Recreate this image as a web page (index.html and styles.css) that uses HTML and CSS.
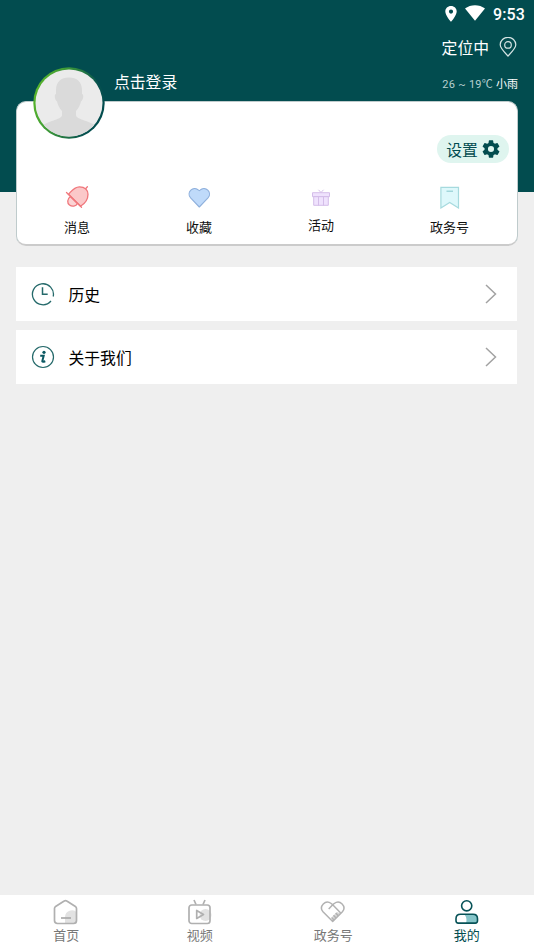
FILE: index.html
```html
<!DOCTYPE html>
<html lang="zh-CN">
<head>
<meta charset="utf-8">
<title>我的</title>
<link rel="stylesheet" href="styles.css">
</head>
<body>
<div class="app">
  <header class="header">
    <div class="status">
      <svg class="status-pin" width="12" height="16" viewBox="0 0 12 16"><path fill="#fff" fill-rule="evenodd" d="M6 0C2.700 0 .3 2.400.3 5.600.3 9.700 6 16 6 16s5.700-6.300 5.700-10.400C11.700 2.400 9.300 0 6 0zm0 3.500a2.100 2.100 0 1 1 0 4.200 2.100 2.100 0 0 1 0-4.200z"/></svg>
      <svg class="status-wifi" width="20" height="16" viewBox="0 0 20 16"><path fill="#fff" d="M10 15.800L0 3.600C5.500-.9 14.500-.9 20 3.600z"/></svg>
      <span class="clock">9:53</span>
    </div>
    <div class="location">
      <span>定位中</span>
      <svg width="18" height="20" viewBox="0 0 18 20" fill="none" stroke="#d5e4e4" stroke-width="1.200"><path d="M9 19C6 15.800 1.200 11.300 1.200 7.800A7.500 7.200 0 0 1 16.800 7.800C16.800 11.300 12 15.800 9 19z"/><circle cx="9" cy="7.900" r="3.300"/></svg>
    </div>
    <div class="login-row">
      <span class="login">点击登录</span>
      <span class="weather">26 ~ 19℃ <b>小雨</b></span>
    </div>
  </header>

  <main class="main">
    <section class="card">
      <svg class="avatar" width="72" height="72" viewBox="0 0 72 72">
        <defs>
          <linearGradient id="ring" x1="0" y1=".35" x2="1" y2=".65"><stop offset="0" stop-color="#59b52b"/><stop offset=".35" stop-color="#3c9838"/><stop offset=".8" stop-color="#07524f"/><stop offset="1" stop-color="#024b4e"/></linearGradient>
          <clipPath id="face"><circle cx="36" cy="36" r="33.500"/></clipPath>
        </defs>
        <circle cx="36" cy="36" r="35.700" fill="url(#ring)"/>
        <circle cx="36" cy="36" r="33.500" fill="#ebebeb"/>
        <path clip-path="url(#face)" fill="#dadada" d="M36 10.500c-8 0-13 4.500-13 12.500v4c-2 0-1.500 6 1 7.500 1 4 2.500 7 5 9.500v4c0 5-17 6-21 12.500V72h56V60.500C60 54 43 53 43 48v-4c2.500-2.500 4-5.500 5-9.500 2.500-1.500 3-7.500 1-7.500v-4c0-8-5-12.500-13-12.500z"/>
      </svg>
      <div class="settings">
        <span>设置</span>
        <svg width="18" height="18" viewBox="2 2 20 20"><path fill="#024c4f" d="M19.140 12.940c.04-.3.060-.61.060-.94s-.02-.64-.07-.94l2.030-1.580a.49.49 0 0 0 .12-.61l-1.920-3.320a.49.49 0 0 0-.59-.22l-2.390.96a7 7 0 0 0-1.620-.94l-.36-2.540a.48.48 0 0 0-.48-.41h-3.840a.47.47 0 0 0-.47.41l-.36 2.540c-.59.240-1.130.570-1.620.94l-2.390-.96a.48.48 0 0 0-.59.220L2.740 8.870a.47.47 0 0 0 .12.610l2.030 1.580a6 6 0 0 0 0 1.880l-2.030 1.580a.49.49 0 0 0-.12.610l1.920 3.320c.12.220.370.290.590.220l2.390-.96c.5.380 1.030.7 1.620.94l.36 2.540c.05.240.240.410.480.410h3.840c.24 0 .44-.17.470-.41l.36-2.540a7 7 0 0 0 1.620-.94l2.390.96c.22.080.470 0 .59-.22l1.920-3.320a.47.47 0 0 0-.12-.61zM12 15.400a3.400 3.400 0 1 1 0-6.800 3.400 3.400 0 0 1 0 6.800z"/></svg>
      </div>
      <nav class="shortcuts">
        <a class="shortcut">
          <svg width="24" height="24" viewBox="0 0 24 24" fill="none" stroke="#f0777c" stroke-width="1.300" stroke-linecap="round"><path fill="#fbd3d4" d="M5.500 11.500C2 14 2 18 4.500 20s6.500 1.500 8-1.500z"/><path fill="#fbc8c9" d="M3.500 9.300C6.500 6 9 1.800 14.500 1.800c5.500 0 8.500 3.500 8.500 7.500 0 5-2.500 9-7.500 12z"/><path d="M1.500 7.500L16.500 22.300M20.800 3.500l1.600-1.700"/></svg>
          <span>消息</span>
        </a>
        <a class="shortcut">
          <svg width="24" height="24" viewBox="0 0 24 24"><path fill="#bfdafa" stroke="#8fb0dc" stroke-width="1.100" stroke-linejoin="round" d="M12.300 22L3.600 12.900C-1.200 7.500 6.300.3 11.600 5.100l.7.600.7-.6C18.300.3 25.800 7.500 21 12.900z"/></svg>
          <span>收藏</span>
        </a>
        <a class="shortcut activity">
          <svg width="20" height="20" viewBox="0 0 20 20" fill="#efe2fd" stroke="#d4bde9" stroke-width="1"><path d="M2.700 8.500h14.600v8.800H2.700zM1.500 4.700h17v4h-17z"/><path fill="none" d="M7.500 9V17.500M12.500 9V17.500M10 4.500L7.500 1.800M10 4.500l2.500-2.700"/></svg>
          <span>活动</span>
        </a>
        <a class="shortcut">
          <svg width="24" height="24" viewBox="0 0 24 24"><path fill="#def8fb" stroke="#a6dade" stroke-width="1.200" d="M3.900 2.400h17.600v20.600l-8.800-5.500-8.800 5.500z"/><path stroke="#92ced4" stroke-width="1.200" d="M9.500 6.200h6.500"/></svg>
          <span>政务号</span>
        </a>
      </nav>
    </section>

    <a class="row">
      <svg class="row-icon" width="24" height="24" viewBox="0 0 24 24" fill="none" stroke="#24696a" stroke-width="1.300"><path d="M20 19A10.500 10.500 0 1 1 22.200 14.500"/><path stroke-width="1.500" d="M11.500 5.200V12.300h5.200"/></svg>
      <span>历史</span>
      <svg class="chevron" width="14" height="22" viewBox="0 0 14 22"><path fill="none" stroke="#a2a2a2" stroke-width="1.500" d="M2 2l9.500 9L2 20"/></svg>
    </a>
    <a class="row">
      <svg class="row-icon" width="24" height="24" viewBox="0 0 24 24"><circle cx="12" cy="12" r="10.500" fill="none" stroke="#24696a" stroke-width="1.200"/><circle cx="13" cy="7.300" r="1.600" fill="#0b5862"/><path fill="none" stroke="#0b5862" stroke-width="2" d="M9.200 10.700h3.500l-1.400 5.400q-.2 1.200 3 .1"/></svg>
      <span>关于我们</span>
      <svg class="chevron" width="14" height="22" viewBox="0 0 14 22"><path fill="none" stroke="#a2a2a2" stroke-width="1.500" d="M2 2l9.500 9L2 20"/></svg>
    </a>
  </main>

  <nav class="tabs">
    <a class="tab">
      <svg width="26" height="26" viewBox="0 0 26 26"><path fill="#e2e2e2" d="M24 13.500a7 7 0 0 0-12 4.500v6.500h10q2 0 2-2z"/><path fill="none" stroke="#b0b0b0" stroke-width="1.700" stroke-linejoin="round" d="M1.500 9.500q0-1.300 1.100-2L11.200 2q1.300-.9 2.600 0l8.600 5.500q1.100.7 1.100 2v12q0 3-3 3h-16q-3 0-3-3z"/><path stroke="#aaa" stroke-width="1.700" d="M8 19h10"/></svg>
      <span>首页</span>
    </a>
    <a class="tab">
      <svg width="26" height="26" viewBox="0 0 26 26"><circle cx="18.500" cy="16" r="6" fill="#e2e2e2"/><g fill="none" stroke="#b0b0b0" stroke-width="1.700" stroke-linejoin="round"><rect x="2" y="6" width="21" height="18.500" rx="2.700"/><path d="M7 1l2 4.500M18 1l-2 4.500M9.700 11.500v8l6.800-4z"/></g></svg>
      <span>视频</span>
    </a>
    <a class="tab">
      <svg width="26" height="26" viewBox="0 0 26 26" fill="none" stroke="#b2b2b2" stroke-width="1.500" stroke-linejoin="round"><path fill="#d8d8d8" stroke="none" d="M12 18l5-5 3.500 1.500-8 7.500z"/><path d="M12.700 22.500L3 12.800C-1.500 7.300 5.500 0 11.200 4.500l1.500 1.300 1.500-1.300c5.700-4.500 12.700 2.800 8.200 8.300z"/><path d="M12.700 5.800L8.700 10M12.700 5.800l8 8.200M11.500 18.500l2.500 2.500M13.500 16.200l2.500 2.700M15.700 14l2.500 2.700"/></svg>
      <span>政务号</span>
    </a>
    <a class="tab active">
      <svg width="26" height="26" viewBox="0 0 26 26"><path fill="#86c5c9" d="M10.500 15.500h11q2 0 2 3v4q0 2-2 2H12q1.500-5-1.500-9z"/><g fill="none" stroke="#075257" stroke-width="1.600"><circle cx="12.700" cy="6.800" r="5.100"/><path d="M6.500 15.300h12.500q4.500 0 4.500 4.500v2q0 2.300-2.300 2.300H4.300q-2.300 0-2.300-2.300v-2q0-4.500 4.500-4.500z"/></g></svg>
      <span>我的</span>
    </a>
  </nav>
</div>
</body>
</html>
```
FILE: styles.css
```css
* { box-sizing: border-box; }
body { margin: 0; font-family: Roboto, "Noto Sans CJK SC", sans-serif; color: #111; }
svg { display: block; flex: none; }
.app { display: flex; flex-direction: column; height: 949px; background: #efefef; overflow: hidden; }

.header { height: 192px; flex: none; background: #024c4f; color: #fff; }
.status { display: flex; align-items: center; justify-content: flex-end; height: 28px; padding-right: 9px; }
.status-pin { margin-right: 8px; }
.status-wifi { margin: -2px 8px 0 0; }
.clock { font-size: 16px; font-weight: 500; line-height: 20px; letter-spacing: .1px; padding-top: 1px; }
.location { display: flex; align-items: center; justify-content: flex-end; gap: 10px; height: 38px; padding-right: 17px; font-size: 15.8px; }
.login-row { display: flex; align-items: center; justify-content: space-between; height: 34px; padding: 0 16px 0 114px; }
.login { font-size: 15.8px; line-height: 24px; }
.weather { font-size: 11px; letter-spacing: .25px; color: #b8cfcf; }
.weather b { font-weight: 400; color: #fff; letter-spacing: 0; }

.main { flex: 1; padding: 0 17px 0 16px; margin-top: -91px; }
.card { position: relative; height: 145px; margin: 0 -1px 21px 0; padding-top: 33px; background: #fff; border: 1px solid #bfcbcc; border-bottom: 2px solid #cbcbcb; border-radius: 10px; }
.avatar { position: absolute; left: 16px; top: -35px; }
.settings { display: flex; align-items: center; justify-content: center; gap: 4px; width: 72px; height: 28px; margin: 0 8px 0 auto; border-radius: 14px; background: #dff5ef; color: #024c4f; font-size: 15.8px; }
.shortcuts { display: flex; justify-content: space-between; padding: 22px 48px 0 47px; }
.shortcut { display: flex; flex-direction: column; align-items: center; gap: 9px; font-size: 13px; line-height: 20px; }
.activity { padding-top: 3px; gap: 8px; }

.row { display: flex; align-items: center; height: 54px; margin-bottom: 9px; padding: 0 19px 0 14.500px; background: #fff; font-size: 15.8px; color: #000; }
.row-icon { margin-right: 14px; }
.chevron { margin-left: auto; }

.tabs { display: flex; flex: none; height: 54px; background: #fff; color: #777; }
.tab { flex: 1; display: flex; flex-direction: column; align-items: center; padding-top: 4px; gap: 1px; font-size: 13px; line-height: 20px; }
.tab svg { margin-right: 1px; }
.tab span { margin-right: 1px; }
.active { color: #024c4f; }
```
